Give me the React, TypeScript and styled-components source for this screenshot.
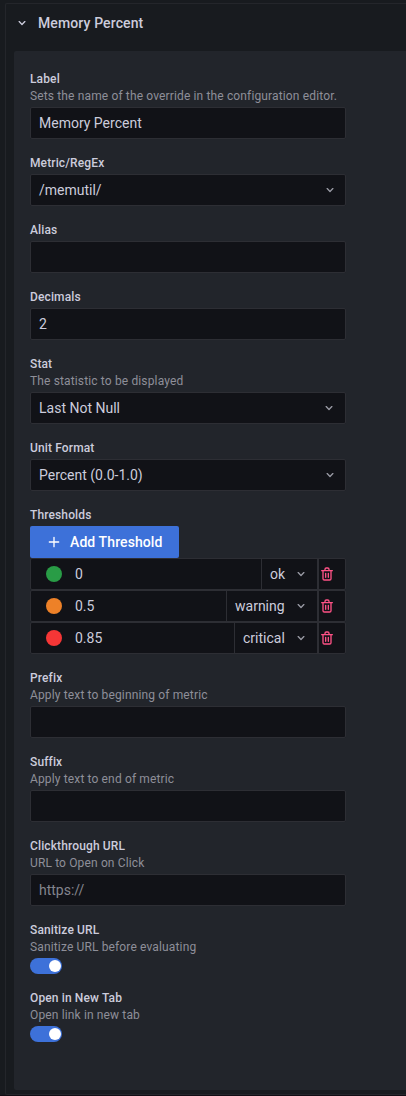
import React from "react";
import styled, { createGlobalStyle } from "styled-components";

const GlobalStyle = createGlobalStyle`
  *, *::before, *::after { box-sizing: border-box; }
  body {
    margin: 0;
    background: #181b1f;
    color: #ccccdc;
    font-family: Roboto, "Liberation Sans", sans-serif;
    font-size: 14px;
    overflow: hidden;
  }
  input, button { font: inherit; letter-spacing: inherit; color: inherit; }
`;

const Page = styled.div`
  height: 1096px;
  padding: 3px 0 0 5px;
  overflow: hidden;
  border-bottom: 1px solid #120d14;
`;

const Section = styled.section`
  height: 1092px;
  border: 1px solid #24262b;
  border-right: 0;
  border-radius: 2px 0 0 2px;
  padding: 0 0 0 8px;
`;

const SectionHeader = styled.header`
  display: flex;
  align-items: center;
  gap: 8px;
  height: 47px;
  padding: 0 0 10px 0;
`;

const Title = styled.h2`
  margin: 0;
  font-size: 14px;
  line-height: 22px;
  font-weight: 500;
  letter-spacing: 0.12px;
`;

const Panel = styled.div`
  height: 1039px;
  padding: 20px 60px 0 16px;
  background: #22252b;
  border-radius: 2px 0 0 2px;
`;

const FieldRoot = styled.div`
  display: flex;
  flex-direction: column;
  margin-bottom: 16px;
`;

const LabelText = styled.div`
  height: 15px;
  font-size: 12px;
  line-height: 17px;
  font-weight: 500;
  letter-spacing: 0.13px;
`;

const Description = styled.div`
  height: 15px;
  margin-top: 2px;
  font-size: 12px;
  line-height: 17px;
  letter-spacing: 0.14px;
  color: #8e8f99;
`;

const Control = styled.div`
  display: flex;
  flex-direction: column;
  align-items: flex-start;
  margin-top: 4px;
`;

const TextInput = styled.input`
  width: 100%;
  height: 32px;
  padding: 0 8px;
  border: 1px solid #2d2e34;
  border-radius: 2px;
  background: #111217;
  outline: none;
  &::placeholder { color: #84858e; opacity: 1; }
`;

const SelectBox = styled.div<{ $inset?: number }>`
  display: flex;
  align-items: center;
  justify-content: space-between;
  width: 100%;
  height: 32px;
  padding: 0 ${(p) => p.$inset ?? 8}px 0 8px;
  border: 1px solid #2d2e34;
  border-radius: 2px;
  background: #111217;
`;

const AddButton = styled.button`
  display: flex;
  align-items: center;
  gap: 8px;
  width: 149px;
  height: 32px;
  padding: 0 0 0 16px;
  border: 0;
  border-radius: 2px;
  background: #3d71d9;
  color: #fff;
  font-weight: 500;
  letter-spacing: 0.1px;
`;

const ThresholdRow = styled.div`
  display: flex;
  width: 100%;
  height: 32px;
  border: 1px solid #2d2e34;
  border-radius: 2px;
  background: #111217;
`;

const ThresholdValue = styled.div`
  flex: 1;
  display: flex;
  align-items: center;
  gap: 13px;
  padding-left: 15px;
`;

const Dot = styled.span<{ $color: string }>`
  width: 16px;
  height: 16px;
  border-radius: 50%;
  background: ${(p) => p.$color};
`;

const StateSelect = styled.div<{ $width: number }>`
  display: flex;
  align-items: center;
  justify-content: space-between;
  width: ${(p) => p.$width}px;
  padding: 0 8px;
  border-left: 1px solid #2d2e34;
`;

const DeleteButton = styled.button`
  display: flex;
  align-items: center;
  width: 28px;
  padding: 0;
  border: 0;
  border-left: 2px solid #2d2e34;
  background: transparent;
`;

const Switch = styled.div`
  display: flex;
  align-items: center;
  justify-content: flex-end;
  width: 32px;
  height: 16px;
  padding-right: 1px;
  border-radius: 8px;
  background: #3d71d9;
`;

const Knob = styled.span`
  width: 12px;
  height: 12px;
  border-radius: 50%;
  background: #fff;
`;

const Chevron = ({ color = "#9a9ba5" }: { color?: string }) => (
  <svg width="16" height="16" viewBox="0 0 24 24" fill={color}>
    <path d="M17 9.17a1 1 0 0 0-1.41 0L12 12.71 8.46 9.17a1 1 0 0 0-1.41 0 1 1 0 0 0 0 1.42l4.24 4.24a1 1 0 0 0 1.42 0L17 10.59a1 1 0 0 0 0-1.42Z" />
  </svg>
);

const Plus = () => (
  <svg width="16" height="16" viewBox="0 0 24 24" fill="#fff">
    <path d="M19 11h-6V5a1 1 0 0 0-2 0v6H5a1 1 0 0 0 0 2h6v6a1 1 0 0 0 2 0v-6h6a1 1 0 0 0 0-2Z" />
  </svg>
);

const Trash = () => (
  <svg width="16" height="16" viewBox="0 0 24 24" fill="#ff5286">
    <path d="M10 18a1 1 0 0 0 1-1v-6a1 1 0 0 0-2 0v6a1 1 0 0 0 1 1ZM20 6h-4V5a3 3 0 0 0-3-3h-2a3 3 0 0 0-3 3v1H4a1 1 0 0 0 0 2h1v11a3 3 0 0 0 3 3h8a3 3 0 0 0 3-3V8h1a1 1 0 0 0 0-2ZM10 5a1 1 0 0 1 1-1h2a1 1 0 0 1 1 1v1h-4V5Zm7 14a1 1 0 0 1-1 1H8a1 1 0 0 1-1-1V8h10v11Zm-3-1a1 1 0 0 0 1-1v-6a1 1 0 0 0-2 0v6a1 1 0 0 0 1 1Z" />
  </svg>
);

interface FieldProps {
  label: string;
  description?: string;
  children: React.ReactNode;
}

const Field = ({ label, description, children }: FieldProps) => (
  <FieldRoot>
    <LabelText>{label}</LabelText>
    {description && <Description>{description}</Description>}
    <Control>{children}</Control>
  </FieldRoot>
);

const thresholds = [
  { value: "0", state: "ok", color: "#299c46", width: 56 },
  { value: "0.5", state: "warning", color: "#ed8128", width: 91 },
  { value: "0.85", state: "critical", color: "#f53636", width: 83 },
];

export default function App() {
  return (
    <>
      <GlobalStyle />
      <Page>
        <Section>
          <SectionHeader>
            <Chevron color="#ccccdc" />
            <Title>Memory Percent</Title>
          </SectionHeader>
          <Panel>
            <Field label="Label" description="Sets the name of the override in the configuration editor.">
              <TextInput defaultValue="Memory Percent" />
            </Field>
            <Field label="Metric/RegEx">
              <SelectBox $inset={7}>/memutil/<Chevron /></SelectBox>
            </Field>
            <Field label="Alias">
              <TextInput />
            </Field>
            <Field label="Decimals">
              <TextInput defaultValue="2" />
            </Field>
            <Field label="Stat" description="The statistic to be displayed">
              <SelectBox>Last Not Null<Chevron /></SelectBox>
            </Field>
            <Field label="Unit Format">
              <SelectBox $inset={7}>Percent (0.0-1.0)<Chevron /></SelectBox>
            </Field>
            <Field label="Thresholds">
              <AddButton><Plus />Add Threshold</AddButton>
              {thresholds.map((t) => (
                <ThresholdRow key={t.state}>
                  <ThresholdValue><Dot $color={t.color} />{t.value}</ThresholdValue>
                  <StateSelect $width={t.width}>{t.state}<Chevron /></StateSelect>
                  <DeleteButton aria-label="Delete threshold"><Trash /></DeleteButton>
                </ThresholdRow>
              ))}
            </Field>
            <Field label="Prefix" description="Apply text to beginning of metric">
              <TextInput />
            </Field>
            <Field label="Suffix" description="Apply text to end of metric">
              <TextInput />
            </Field>
            <Field label="Clickthrough URL" description="URL to Open on Click">
              <TextInput placeholder="https://" />
            </Field>
            <Field label="Sanitize URL" description="Sanitize URL before evaluating">
              <Switch><Knob /></Switch>
            </Field>
            <Field label="Open in New Tab" description="Open link in new tab">
              <Switch><Knob /></Switch>
            </Field>
          </Panel>
        </Section>
      </Page>
    </>
  );
}
